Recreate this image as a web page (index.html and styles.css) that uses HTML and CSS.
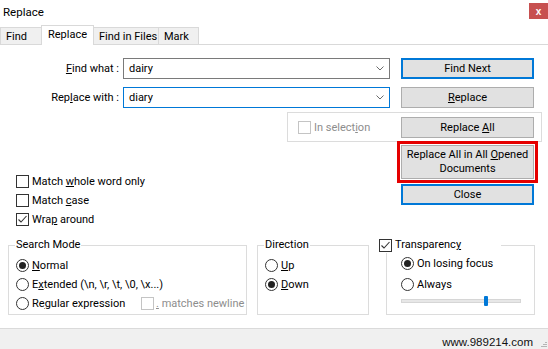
FILE: index.html
```html
<!DOCTYPE html>
<html lang="en">
<head>
<meta charset="utf-8">
<title>Replace</title>
<link rel="stylesheet" href="styles.css">
</head>
<body>
<div class="window">
  <header class="titlebar">
    <span class="title">Replace</span>
    <span class="close">x</span>
  </header>
  <nav class="tabs">
    <span class="tab t-find">Find</span>
    <span class="tab t-replace active">Replace</span>
    <span class="tab t-files">Find in Files</span>
    <span class="tab t-mark">Mark</span>
  </nav>
  <main class="panel">
    <div class="row">
      <span class="lbl"><u>F</u>ind what :</span>
      <span class="combo"><span class="val">dairy</span><svg class="chev" width="8" height="5" viewBox="0 0 8 5"><path d="M0.5 0.5 L4 4 L7.5 0.5" fill="none" stroke="#6b6b6b" stroke-width="1"/></svg></span>
      <span class="btn default"><span>Find Next</span></span>
    </div>
    <div class="row">
      <span class="lbl">Rep<u>l</u>ace with :</span>
      <span class="combo focus"><span class="val">diary</span><svg class="chev" width="8" height="5" viewBox="0 0 8 5"><path d="M0.5 0.5 L4 4 L7.5 0.5" fill="none" stroke="#6b6b6b" stroke-width="1"/></svg></span>
      <span class="btn"><span><u>R</u>eplace</span></span>
    </div>
    <div class="selgroup">
      <span class="opt disabled"><span class="cb"></span><span>In select<u>i</u>on</span></span>
      <span class="btn"><span>Replace <u>A</u>ll</span></span>
    </div>
    <div class="mid">
      <div class="options">
        <div class="opt"><span class="cb"></span><span>Match <u>w</u>hole word only</span></div>
        <div class="opt"><span class="cb"></span><span>Match <u>c</u>ase</span></div>
        <div class="opt"><span class="cb"><svg width="11" height="11" viewBox="0 0 11 11"><path d="M1.5 5.5 L4 8 L9.5 2" fill="none" stroke="#333" stroke-width="1.1"/></svg></span><span>Wra<u>p</u> around</span></div>
      </div>
      <div class="actions">
        <div class="hl"><span class="btn tall"><span>Replace All in All <u>O</u>pened<br>Documents</span></span></div>
        <span class="btn default"><span>Close</span></span>
      </div>
    </div>
    <div class="groups">
      <fieldset class="grp mode">
        <legend>Search Mode</legend>
        <div class="opt"><span class="rb on"></span><span><u>N</u>ormal</span></div>
        <div class="opt"><span class="rb"></span><span>E<u>x</u>tended (\n, \r, \t, \0, \x...)</span></div>
        <div class="opt"><span class="rxl"><span class="rb"></span><span>Re<u>g</u>ular expression</span></span><span class="opt disabled sub"><span class="cb"></span><span><u>.</u> matches newline</span></span></div>
      </fieldset>
      <fieldset class="grp dir">
        <legend>Direction</legend>
        <div class="opt"><span class="rb"></span><span><u>U</u>p</span></div>
        <div class="opt"><span class="rb on"></span><span><u>D</u>own</span></div>
      </fieldset>
      <fieldset class="grp trans">
        <legend><span class="lg"><span class="cb"><svg width="11" height="11" viewBox="0 0 11 11"><path d="M1.5 5.5 L4 8 L9.5 2" fill="none" stroke="#333" stroke-width="1.1"/></svg></span><span>Transparenc<u>y</u></span></span></legend>
        <div class="opt trow"><span class="rb on"></span><span>On losing focus</span></div>
        <div class="opt trow"><span class="rb"></span><span>Always</span></div>
        <div class="slider"><span class="track"><span class="thumb"></span></span></div>
      </fieldset>
    </div>
  </main>
  <footer class="status">
    <span class="url">www.989214.com</span>
    <svg class="grip" width="6" height="7" viewBox="0 0 6 7"><rect x="4" y="1" width="2" height="1" fill="#b5b5b5"/><rect x="2" y="3" width="2" height="1" fill="#b5b5b5"/><rect x="4" y="3" width="2" height="1" fill="#b5b5b5"/><rect x="0" y="5" width="2" height="1" fill="#b5b5b5"/><rect x="2" y="5" width="2" height="1" fill="#b5b5b5"/><rect x="4" y="5" width="2" height="1" fill="#b5b5b5"/></svg>
  </footer>
</div>
</body>
</html>
```

FILE: styles.css
```css
* { box-sizing: border-box; }
html, body { margin: 0; padding: 0; }
body {
  width: 548px;
  height: 349px;
  overflow: hidden;
  background: #fff;
  font-family: Roboto, "Noto Sans", sans-serif;
  font-size: 11px;
  color: #000;
}
u { text-underline-offset: 1px; }

.window { display: flex; flex-direction: column; height: 349px; }

.titlebar {
  height: 24px;
  display: flex;
  align-items: flex-start;
  justify-content: space-between;
  flex: none;
}
.title { padding-left: 3px; line-height: 24px; font-size: 11.5px; }
.close {
  width: 19px;
  height: 16px;
  margin-top: 3px;
  background: #c75050;
  color: #fff;
  font: bold 10px "Liberation Sans", sans-serif;
  display: flex;
  align-items: center;
  justify-content: center;
}

.tabs {
  height: 20px;
  display: flex;
  align-items: flex-end;
  flex: none;
}
.tab {
  height: 17px;
  border: 1px solid #d9d9d9;
  border-bottom: none;
  background: #f0f0f0;
  text-align: left;
  padding-left: 5px;
  line-height: 17px;
  margin-left: -1px;
  white-space: nowrap;
}
.t-find { width: 42px; margin-left: 0; }
.t-replace { width: 53px; }
.t-files { width: 66px; }
.t-mark { width: 41px; }
.tab.active {
  position: relative;
  z-index: 1;
  height: 20px;
  margin-bottom: -1px;
  background: #fff;
  line-height: 18px;
  padding-left: 6px;
}

.panel {
  flex: none;
  height: 285px;
  border-top: 1px solid #d9d9d9;
  border-bottom: 1px solid #dadada;
  padding-top: 13px;
  background: #fff;
}

.row { display: flex; align-items: center; height: 21px; }
.row + .row { margin-top: 8px; }
.lbl { width: 120px; text-align: right; padding-right: 1px; }
.combo {
  margin-left: 3px;
  width: 267px;
  height: 21px;
  border: 1px solid #7a7a7a;
  display: flex;
  align-items: center;
  justify-content: space-between;
  padding: 0 5px;
}
.combo.focus { border-color: #0078d7; }

.btn {
  margin-left: 11px;
  width: 133px;
  height: 21px;
  background: #e1e1e1;
  border: 1px solid #adadad;
  display: flex;
  align-items: center;
  justify-content: center;
  text-align: center;
}
.btn.default { border: 2px solid #0078d7; }

.selgroup {
  margin: 4px 0 0 287px;
  width: 255px;
  height: 30px;
  border: 1px solid #dcdcdc;
  padding: 4px 7px 3px 10px;
  display: flex;
  align-items: center;
  justify-content: space-between;
}
.selgroup .btn { margin-left: 0; }

.opt { height: 19px; display: flex; align-items: center; gap: 3px; white-space: nowrap; }
.opt.disabled { color: #8d8d8d; }
.opt.disabled .cb { border-color: #c4c4c4; }

.cb {
  width: 13px;
  height: 13px;
  border: 1px solid #333;
  background: #fff;
  display: flex;
  align-items: center;
  justify-content: center;
  flex: none;
}
.rb {
  width: 13px;
  height: 13px;
  border: 1px solid #333;
  border-radius: 50%;
  background: #fff;
  display: flex;
  align-items: center;
  justify-content: center;
  flex: none;
}
.rb.on::after {
  content: "";
  width: 7px;
  height: 7px;
  border-radius: 50%;
  background: #222;
}

.mid { display: flex; align-items: flex-start; }
.options { width: 397px; padding: 30px 0 0 16px; }
.actions { margin-top: -1px; display: flex; flex-direction: column; }
.hl { border: 3px solid #e50000; padding: 1px; width: 141px; }
.hl .btn { margin-left: 0; height: 34px; line-height: 14px; }
.actions > .btn { margin: 1px 0 0 4px; }

.groups {
  display: flex;
  align-items: flex-start;
  margin-top: 8px;
  padding-left: 8px;
}
.grp {
  margin: 0;
  border: 1px solid #dcdcdc;
  padding: 3px 7px 1px;
  min-width: 0;
  height: 78px;
}
.grp legend { padding: 0 1px; margin-left: -1px; line-height: 16px; }
.mode { width: 239px; }
.dir { width: 112px; margin-left: 10px; }
.trans { width: 149px; margin-left: 17px; padding: 0 0 0 14px; }
.trans legend { margin-left: -22px; width: 122px; padding: 0; }
.lg { display: flex; align-items: center; gap: 3px; height: 16px; }
.trow { height: 21px; }

.rxl { display: flex; align-items: center; gap: 3px; width: 122px; flex: none; }
.sub { gap: 2px; }

.slider { width: 120px; height: 12px; display: flex; align-items: center; }
.track {
  width: 120px;
  height: 4px;
  background: #e7e7e7;
  border: 1px solid #d6d6d6;
  display: flex;
  align-items: center;
}
.thumb {
  margin-left: 82px;
  width: 4px;
  height: 10px;
  background: #0078d7;
  border-radius: 1px;
  flex: none;
}

.status {
  flex: none;
  height: 20px;
  background: #f0f0f0;
  display: flex;
  justify-content: flex-end;
  align-items: flex-start;
  padding: 6px 1px 0 0;
  font-family: "Liberation Sans", Arial, sans-serif;
  font-size: 11.5px;
  line-height: 14px;
  color: #111;
}
.grip { margin: 6px 0 0 8px; }
```
